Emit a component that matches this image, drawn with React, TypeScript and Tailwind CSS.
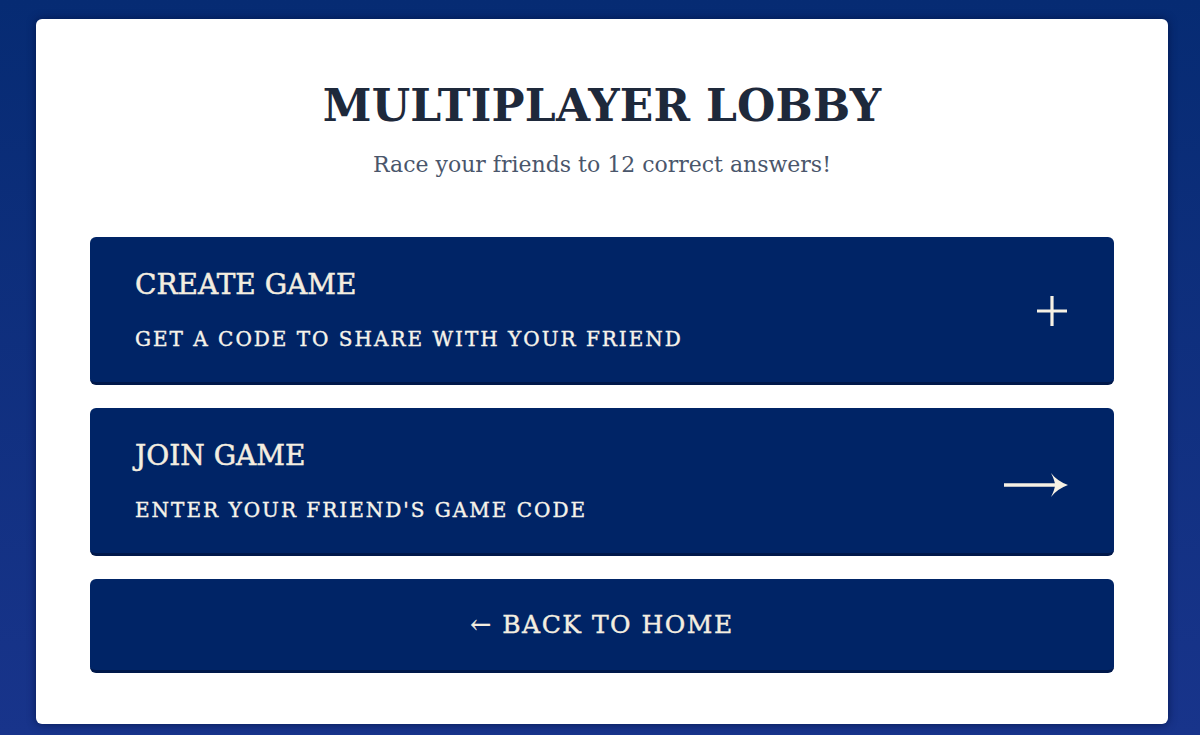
import { useState } from "react";

type LobbyOption = {
    id: string;
    title: string;
    hint: string;
    icon: "plus" | "arrow";
};

const options: LobbyOption[] = [
    { id: "create", title: "CREATE GAME", hint: "GET A CODE TO SHARE WITH YOUR FRIEND", icon: "plus" },
    { id: "join", title: "JOIN GAME", hint: "ENTER YOUR FRIEND'S GAME CODE", icon: "arrow" },
];

const PlusIcon = () => (
    <svg width="32" height="32" viewBox="0 0 32 32" fill="none">
        <path d="M16 1v30M1 16h30" stroke="#f6f1e4" strokeWidth="3.2" />
    </svg>
);

// serif-style arrow with a barbed head
const ArrowIcon = () => (
    <svg width="64" height="26" viewBox="0 0 64 26" fill="none">
        <path d="M0 13h56" stroke="#f6f1e4" strokeWidth="3.6" />
        <path d="M47 1 Q53 9 64 13 Q53 17 47 25 Q51 17 51 13 Q51 9 47 1Z" fill="#f6f1e4" />
    </svg>
);

const OptionButton = ({ option, onPick }: { option: LobbyOption; onPick: (id: string) => void }) => {
    return (
        <button
            onClick={() => onPick(option.id)}
            className="w-full h-[148px] pl-[45px] pr-[46px] flex items-center rounded-[6px] bg-[#002466] border-b-[3px] border-[#00184a] text-left cursor-pointer"
        >
            <div className="flex flex-col gap-[25px]">
                <h2 className="text-[28px] leading-[34px] text-[#f4eee0] [-webkit-text-stroke:0.5px_#f4eee0]">{option.title}</h2>
                <p className="text-[20px] leading-[24px] tracking-[0.1em] text-[#f6f3ea] [-webkit-text-stroke:0.4px_#f6f3ea]">{option.hint}</p>
            </div>
            <div className={`ml-auto flex items-center ${option.icon === "arrow" ? "pt-[8px]" : "pt-[2px]"}`}>
                {option.icon === "plus" ? <PlusIcon /> : <ArrowIcon />}
            </div>
        </button>
    );
};

export default function App() {
    const [picked, setPicked] = useState<string | null>(null);

    return (
        <div
            className="min-h-[735px] w-full pl-[36px] pr-[32px] pt-[19px] pb-[11px] bg-gradient-to-b from-[#062b73] to-[#18348b]"
            style={{ fontFamily: '"DejaVu Serif", "Liberation Serif", serif' }}
        >
            <div className="h-[705px] rounded-[6px] bg-white px-[54px] pt-[61px] shadow-[0_0_8px_rgba(0,18,64,0.75)] flex flex-col" data-picked={picked ?? ""}>
                <h1 className="text-center text-[44px] leading-[52px] font-bold tracking-[0.005em] text-[#1e293b]">
                    MULTIPLAYER LOBBY
                </h1>
                <p className="mt-[19px] text-center text-[22px] leading-[28px] text-[#4a566b]">
                    Race your friends to 12 correct answers!
                </p>

                <div className="mt-[58px] flex flex-col gap-[23px]">
                    {options.map(option => (
                        <OptionButton key={option.id} option={option} onPick={setPicked} />
                    ))}

                    {/* bottom action back to the main menu */}
                    <button
                        onClick={() => setPicked("home")}
                        className="w-full h-[94px] rounded-[6px] bg-[#002466] border-b-[3px] border-[#00184a] flex items-center justify-center text-[25px] tracking-[0.06em] text-[#f4eee0] [-webkit-text-stroke:0.4px_#f4eee0] cursor-pointer"
                    >
                        ← BACK TO HOME
                    </button>
                </div>
            </div>
        </div>
    );
}
